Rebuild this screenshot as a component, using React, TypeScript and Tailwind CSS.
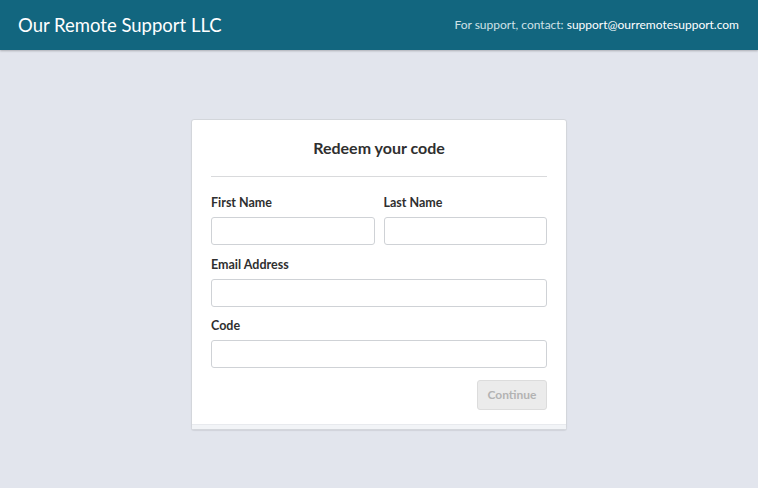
import React from "react";

const Field = ({ label, className = "" }: { label: string; className?: string }) => {
  return (
    <div className={`flex flex-col ${className}`}>
      <label className="text-[12.5px] font-bold text-[#2f2f2f] leading-4 mb-[6px]">{label}</label>
      <input
        type="text"
        className="h-[28px] w-full rounded-[3px] border border-[#cfd2d6] bg-white px-2 text-[13px] outline-none"
      />
    </div>
  );
};

export default function App() {
  return (
    <div className="min-h-[488px] bg-[#e2e5ed] font-['Lato','Open_Sans',sans-serif]">
      {/* Header */}
      <header className="h-[50px] bg-[#12667f] flex items-center justify-between pl-[18px] pr-[19px] shadow-[0_1px_2px_rgba(0,0,0,0.25)]">
        <h1 className="text-[18.5px] text-white leading-none">Our Remote Support LLC</h1>
        <p className="text-[12px] text-[#cfe1e7]">
          For support, contact: <span className="text-white">support@ourremotesupport.com</span>
        </p>
      </header>

      {/* Card */}
      <div className="flex justify-center pt-[69px]">
        <div className="w-[376px] rounded-[3px] border border-[#d3d6db] bg-white shadow-[0_1px_1px_rgba(0,0,0,0.08)]">
          <div className="px-[19px] pt-[18px] pb-[14px]">
            <h2 className="text-center text-[16px] font-bold text-[#2f2f2f] leading-5">Redeem your code</h2>
            <div className="mt-[18px] h-px bg-[#d9dadc]" />

            <div className="mt-[18px] grid grid-cols-2 gap-[9px]">
              <Field label="First Name" />
              <Field label="Last Name" />
            </div>
            <Field label="Email Address" className="mt-[12px]" />
            <Field label="Code" className="mt-[11px]" />

            <div className="mt-[12px] flex justify-end">
              <button className="h-[30px] w-[70px] rounded-[3px] border border-[#dcdcdc] bg-[#ebebeb] text-[12px] font-bold text-[#b3b3b3]">
                Continue
              </button>
            </div>
          </div>
          <div className="h-[5px] bg-[#f2f4f7] border-t border-[#e8eaee]" />
        </div>
      </div>
    </div>
  );
}
